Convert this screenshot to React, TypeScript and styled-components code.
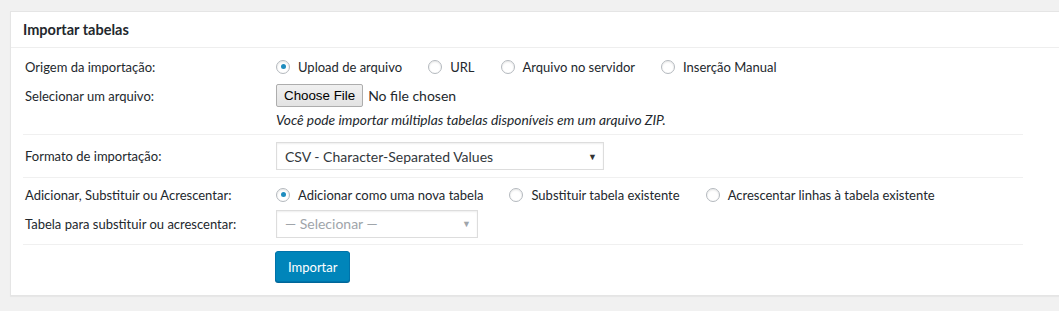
import * as React from 'react'
import styled, { createGlobalStyle } from 'styled-components'

const GlobalStyle = createGlobalStyle`
  body {
    margin: 0;
    background: #f1f1f1;
    font-family: Lato, 'Noto Sans', sans-serif;
    font-size: 13px;
    color: #23282d;
  }
`

const Page = styled.div`
  padding: 11px 0 0 10px;
  height: 300px;
  overflow: hidden;
`

const Postbox = styled.div`
  background: #fff;
  border: 1px solid #e5e5e5;
  border-right: none;
  box-shadow: 0 1px 1px rgba(0, 0, 0, 0.04);
  height: 285px;
  box-sizing: border-box;
`

const Header = styled.h2`
  margin: 0;
  height: 35px;
  display: flex;
  align-items: center;
  padding: 0 12px;
  font-size: 14.5px;
  font-weight: 700;
  border-bottom: 1px solid #eee;
`

const Inside = styled.div`
  padding: 0 25px 0 12px;
  width: 1000px;
`

const Group = styled.div<{ $pad?: string; $last?: boolean }>`
  padding: ${p => p.$pad || '0'};
  border-bottom: ${p => (p.$last ? 'none' : '1px solid #f0f0f0')};
  display: flex;
  flex-direction: column;
`

const Row = styled.div<{ $h: number }>`
  display: flex;
  align-items: center;
  min-height: ${p => p.$h}px;
`

const Label = styled.div`
  width: 251px;
  flex: none;
  padding-left: 2px;
`

const Field = styled.div`
  display: flex;
  align-items: center;
`

const RadioItem = styled.label`
  display: inline-flex;
  align-items: center;
  margin-right: 26px;
  cursor: pointer;
`

const RadioCircle = styled.span<{ $checked?: boolean }>`
  width: 14px;
  height: 14px;
  border: 1px solid #b4b9be;
  border-radius: 50%;
  margin-right: 8px;
  box-shadow: inset 0 1px 2px rgba(0, 0, 0, 0.1);
  display: inline-flex;
  align-items: center;
  justify-content: center;
  box-sizing: border-box;
  &::after {
    content: '';
    width: 5px;
    height: 5px;
    border-radius: 50%;
    background: ${p => (p.$checked ? '#1e8cbe' : 'transparent')};
  }
`

const FileButton = styled.button`
  font-family: 'Liberation Sans', Arial, sans-serif;
  font-size: 13.33px;
  height: 23px;
  padding: 0 7px;
  background: linear-gradient(#f0f0f0, #e3e3e3);
  border: 1px solid #adadad;
  border-radius: 2px;
  color: #000;
`

const FileText = styled.span`
  font-size: 14px;
  margin-left: 5px;
  color: #23282d;
`

const Description = styled.p`
  margin: 0 0 0 251px;
  padding-left: 2px;
  font-style: italic;
  font-size: 13.8px;
  color: #23282d;
  padding-top: 1px;
`

const Select = styled.div<{ $w: number; $disabled?: boolean }>`
  width: ${p => p.$w}px;
  height: 28px;
  box-sizing: border-box;
  border: 1px solid #ddd;
  box-shadow: inset 0 1px 2px rgba(0, 0, 0, 0.07);
  display: flex;
  align-items: center;
  justify-content: space-between;
  padding: 0 6px 0 8px;
  font-size: 14px;
  color: ${p => (p.$disabled ? '#a0a5aa' : '#32373c')};
  background: #fff;
`

const Caret = styled.span<{ $disabled?: boolean }>`
  font-size: 9px;
  color: ${p => (p.$disabled ? '#a0a5aa' : '#333')};
`

const PrimaryButton = styled.button`
  font-family: Lato, 'Noto Sans', sans-serif;
  font-size: 13px;
  height: 31px;
  padding: 0 12px;
  background: #0085ba;
  border: 1px solid #0073aa;
  border-radius: 3px;
  box-shadow: 0 1px 0 #006799;
  color: #fff;
  cursor: pointer;
`

type RadioProps = { label: string; checked?: boolean }

const Radio = ({ label, checked }: RadioProps) => (
  <RadioItem>
    <RadioCircle $checked={checked} />
    {label}
  </RadioItem>
)

export default function App() {
  return (
    <>
      <GlobalStyle />
      <Page>
        <Postbox>
          <Header>Importar tabelas</Header>
          <Inside>
            <Group $pad="4px 0 6px">
              <Row $h={29}>
                <Label>Origem da importação:</Label>
                <Field>
                  <Radio label="Upload de arquivo" checked />
                  <Radio label="URL" />
                  <Radio label="Arquivo no servidor" />
                  <Radio label="Inserção Manual" />
                </Field>
              </Row>
              <Row $h={29}>
                <Label>Selecionar um arquivo:</Label>
                <Field>
                  <FileButton>Choose File</FileButton>
                  <FileText>No file chosen</FileText>
                </Field>
              </Row>
              <Description>Você pode importar múltiplas tabelas disponíveis em um arquivo ZIP.</Description>
            </Group>
            <Group $pad="7px 0">
              <Row $h={28}>
                <Label>Formato de importação:</Label>
                <Select $w={328}>
                  CSV - Character-Separated Values
                  <Caret>▼</Caret>
                </Select>
              </Row>
            </Group>
            <Group $pad="2px 0 6px">
              <Row $h={29}>
                <Label>Adicionar, Substituir ou Acrescentar:</Label>
                <Field>
                  <Radio label="Adicionar como uma nova tabela" checked />
                  <Radio label="Substituir tabela existente" />
                  <Radio label="Acrescentar linhas à tabela existente" />
                </Field>
              </Row>
              <Row $h={29}>
                <Label>Tabela para substituir ou acrescentar:</Label>
                <Select $w={202} $disabled>
                  — Selecionar —
                  <Caret $disabled>▼</Caret>
                </Select>
              </Row>
            </Group>
            <Group $pad="6px 0 0 252px" $last>
              <Row $h={31}>
                <PrimaryButton>Importar</PrimaryButton>
              </Row>
            </Group>
          </Inside>
        </Postbox>
      </Page>
    </>
  )
}
